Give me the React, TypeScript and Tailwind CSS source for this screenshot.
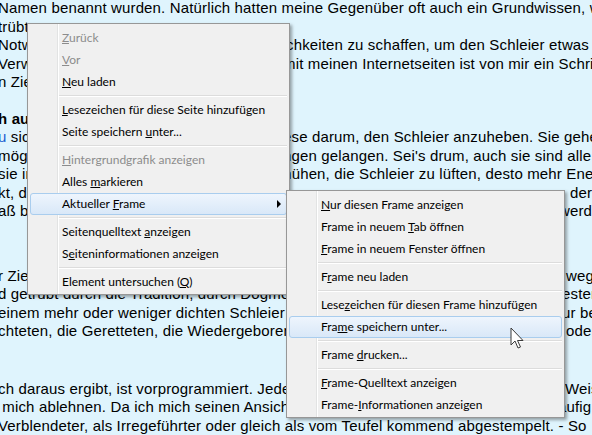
import type { ReactNode } from 'react';

type Line = { l: ReactNode; r?: string; x?: number };

// text lines of the page behind the menu; x = where the part right of the menus starts
const para1: Line[] = [
  { l: 'Namen benannt wurden. Natürlich hatten meine Gegenüber oft auch ein Grundwissen, w' },
  { l: 'trübt war.' },
  { l: 'Notwendigkeit, neue Möglichkeiten', x: 288, r: 'chkeiten zu schaffen, um den Schleier etwas' },
  { l: 'Verwirrung gebracht hat. Mit', x: 285, r: 'mit meinen Internetseiten ist von mir ein Schritt' },
  { l: 'n Ziel zu erreichen.' },
];

const para2: Line[] = [
  {
    l: (
      <>
        <span className="text-[#1a5fd0]">u</span> sich auf den Weg gemacht
      </>
    ),
    x: 285,
    r: 'ese darum, den Schleier anzuheben. Sie gehen',
  },
  { l: 'möglich ist, zu den Erkenntnissen', x: 285, r: 'ngen gelangen. Sei\'s drum, auch sie sind alle' },
  { l: 'sie in ihrem Bem', x: 281, r: 'mühen, die Schleier zu lüften, desto mehr Energie' },
  { l: 'kt, die einen in der', x: 572, r: 'der Zeit' },
  { l: 'aß bis heute nicht', x: 561, r: 'werden' },
];

const para3: Line[] = [
  { l: 'r Ziel ist es, die', x: 568, r: 'wegen' },
  { l: 'd getrübt durch die Tradition, durch Dogmen und', x: 564, r: 'ester' },
  { l: 'einem mehr oder weniger dichten Schleier verdeckt', x: 564, r: 'ur bemerkt' },
  { l: 'chteten, die Geretteten, die Wiedergeborenen', x: 568, r: 'oder' },
];

const para4: Line[] = [
  { l: 'ch daraus ergibt, ist vorprogrammiert. Jeder, der', x: 567, r: 'Weise' },
  { l: ' mich ablehnen. Da ich mich seinen Ansichten nicht', x: 560, r: 'äufig' },
  { l: 'Verblendeter, als Irregeführter oder gleich als vom Teufel kommend abgestempelt. - So' },
];

function TextLine({ l, r, x }: Line) {
  if (x === undefined) return <div className="whitespace-pre">{l}</div>;
  return (
    <div className="flex whitespace-pre">
      <span className="shrink-0 overflow-hidden" style={{ width: x }}>
        {l}
      </span>
      <span>{r}</span>
    </div>
  );
}

function Item({
  children,
  disabled,
  active,
  arrow,
}: {
  children: ReactNode;
  disabled?: boolean;
  active?: boolean;
  arrow?: boolean;
}) {
  return (
    <div
      className={
        'relative mx-[2px] flex h-[22px] items-center rounded-[3px] border pl-[31px] ' +
        (active
          ? 'border-[#a9cdee] bg-linear-to-b from-[#eef5fd] to-[#d9e8f8] '
          : 'border-transparent ') +
        (disabled ? 'text-[#8c8c8c]' : 'text-black')
      }
    >
      <span className="whitespace-pre">{children}</span>
      {arrow && (
        <span className="ml-auto mr-[5px] h-0 w-0 border-y-[4px] border-l-[4px] border-y-transparent border-l-black" />
      )}
    </div>
  );
}

function Sep() {
  return (
    <div className="flex h-[6px] flex-col justify-center pl-[29px] pr-[2px]">
      <div className="h-px bg-[#dcdcdc]" />
      <div className="h-px bg-white" />
    </div>
  );
}

function Menu({ className, children }: { className: string; children: ReactNode }) {
  return (
    <div
      className={
        'absolute border border-[#979797] bg-[#f0f0f0] pt-[3px] pb-px font-["Lato","Segoe_UI",sans-serif] text-[12px] tracking-normal shadow-[2px_2px_3px_rgba(0,0,0,0.35)] ' +
        className
      }
    >
      <div className="absolute top-0 bottom-0 left-[29px] w-px bg-[#e2e3e3]" />
      <div className="absolute top-0 bottom-0 left-[30px] w-px bg-white" />
      {children}
    </div>
  );
}

export default function App() {
  return (
    <div className="relative h-[435px] w-[592px] overflow-hidden bg-[#dff4fd] font-['Liberation_Sans',Arial,sans-serif] text-[15px] leading-[18.5px] text-black">
      <div className="-ml-[2px] tracking-[0.15px]">
        <div className="-mt-[1px]">
          {para1.map((ln, i) => (
            <TextLine key={i} {...ln} />
          ))}
        </div>
        <div className="mt-[18px]">
          <div className="font-bold whitespace-pre">h auf der Suche</div>
          {para2.map((ln, i) => (
            <TextLine key={i} {...ln} />
          ))}
        </div>
        <div className="mt-[46px]">
          {para3.map((ln, i) => (
            <TextLine key={i} {...ln} />
          ))}
        </div>
        <div className="mt-[39px]">
          {para4.map((ln, i) => (
            <TextLine key={i} {...ln} />
          ))}
        </div>
      </div>

      <Menu className="left-[27px] top-[23px] w-[263px]">
        <Item disabled>
          <u>Z</u>urück
        </Item>
        <Item disabled>
          <u>V</u>or
        </Item>
        <Item>
          <u>N</u>eu laden
        </Item>
        <Sep />
        <Item>
          <u>L</u>esezeichen für diese Seite hinzufügen
        </Item>
        <Item>
          Seite speichern <u>u</u>nter...
        </Item>
        <Sep />
        <Item disabled>
          <u>H</u>intergrundgrafik anzeigen
        </Item>
        <Item>
          Alles <u>m</u>arkieren
        </Item>
        <Item active arrow>
          Aktueller <u>F</u>rame
        </Item>
        <Sep />
        <Item>
          Seitenquelltext <u>a</u>nzeigen
        </Item>
        <Item>
          S<u>e</u>iteninformationen anzeigen
        </Item>
        <Sep />
        <Item>
          Element untersuchen (<u>Q</u>)
        </Item>
      </Menu>

      <Menu className="left-[286px] top-[190px] w-[279px]">
        <Item>
          <u>N</u>ur diesen Frame anzeigen
        </Item>
        <Item>
          Frame in neuem <u>T</u>ab öffnen
        </Item>
        <Item>
          <u>F</u>rame in neuem Fenster öffnen
        </Item>
        <Sep />
        <Item>
          F<u>r</u>ame neu laden
        </Item>
        <Sep />
        <Item>
          Lese<u>z</u>eichen für diesen Frame hinzufügen
        </Item>
        <Item active>
          Fra<u>m</u>e speichern unter...
        </Item>
        <Sep />
        <Item>
          Frame <u>d</u>rucken...
        </Item>
        <Sep />
        <Item>
          <u>F</u>rame-Quelltext anzeigen
        </Item>
        <Item>
          Frame-<u>I</u>nformationen anzeigen
        </Item>
      </Menu>

      <svg width="15" height="23" viewBox="0 0 15 23" className="absolute left-[510px] top-[327px]">
        <path
          d="M1 1 L1 18 L5 14 L8 21 L10.5 20 L7.5 13.5 L13 13.5 Z"
          fill="white"
          stroke="#3a3a3a"
          strokeWidth="1"
          strokeLinejoin="round"
        />
      </svg>
    </div>
  );
}
